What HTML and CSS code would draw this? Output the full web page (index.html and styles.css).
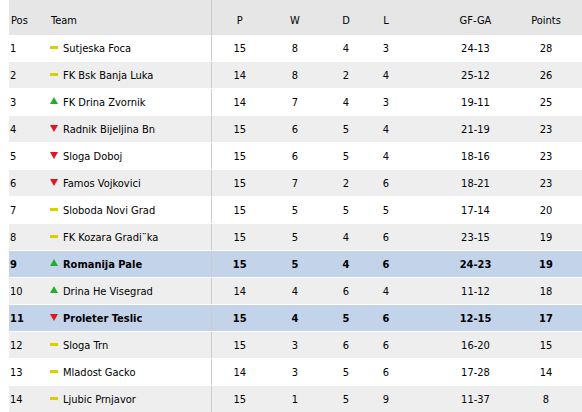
FILE: index.html
```html
<!DOCTYPE html>
<html>
<head>
<meta charset="utf-8">
<link rel="stylesheet" href="styles.css">
</head>
<body>
<table class="standings">
  <colgroup>
    <col class="c-pos"><col class="c-team"><col class="c-p"><col class="c-w"><col class="c-d"><col class="c-l"><col class="c-gd"><col class="c-pts">
  </colgroup>
  <thead>
    <tr>
      <th class="pos">Pos</th><th class="team">Team</th><th class="num div">P</th><th class="num">W</th><th class="num">D</th><th class="num">L</th><th class="gd">GF-GA</th><th class="num">Points</th>
    </tr>
  </thead>
  <tbody>
    <tr><td class="pos">1</td><td class="team"><span class="trend same"></span>Sutjeska Foca</td><td class="num div">15</td><td class="num">8</td><td class="num">4</td><td class="num">3</td><td class="gd">24-13</td><td class="num">28</td></tr>
    <tr><td class="pos">2</td><td class="team"><span class="trend same"></span>FK Bsk Banja Luka</td><td class="num div">14</td><td class="num">8</td><td class="num">2</td><td class="num">4</td><td class="gd">25-12</td><td class="num">26</td></tr>
    <tr><td class="pos">3</td><td class="team"><span class="trend up"></span>FK Drina Zvornik</td><td class="num div">14</td><td class="num">7</td><td class="num">4</td><td class="num">3</td><td class="gd">19-11</td><td class="num">25</td></tr>
    <tr><td class="pos">4</td><td class="team"><span class="trend down"></span>Radnik Bijeljina Bn</td><td class="num div">15</td><td class="num">6</td><td class="num">5</td><td class="num">4</td><td class="gd">21-19</td><td class="num">23</td></tr>
    <tr><td class="pos">5</td><td class="team"><span class="trend down"></span>Sloga Doboj</td><td class="num div">15</td><td class="num">6</td><td class="num">5</td><td class="num">4</td><td class="gd">18-16</td><td class="num">23</td></tr>
    <tr><td class="pos">6</td><td class="team"><span class="trend down"></span>Famos Vojkovici</td><td class="num div">15</td><td class="num">7</td><td class="num">2</td><td class="num">6</td><td class="gd">18-21</td><td class="num">23</td></tr>
    <tr><td class="pos">7</td><td class="team"><span class="trend same"></span>Sloboda Novi Grad</td><td class="num div">15</td><td class="num">5</td><td class="num">5</td><td class="num">5</td><td class="gd">17-14</td><td class="num">20</td></tr>
    <tr><td class="pos">8</td><td class="team"><span class="trend same"></span>FK Kozara Gradi¨ka</td><td class="num div">15</td><td class="num">5</td><td class="num">4</td><td class="num">6</td><td class="gd">23-15</td><td class="num">19</td></tr>
    <tr class="hl"><td class="pos">9</td><td class="team"><span class="trend up"></span>Romanija Pale</td><td class="num div">15</td><td class="num">5</td><td class="num">4</td><td class="num">6</td><td class="gd">24-23</td><td class="num">19</td></tr>
    <tr><td class="pos">10</td><td class="team"><span class="trend up"></span>Drina He Visegrad</td><td class="num div">14</td><td class="num">4</td><td class="num">6</td><td class="num">4</td><td class="gd">11-12</td><td class="num">18</td></tr>
    <tr class="hl"><td class="pos">11</td><td class="team"><span class="trend down"></span>Proleter Teslic</td><td class="num div">15</td><td class="num">4</td><td class="num">5</td><td class="num">6</td><td class="gd">12-15</td><td class="num">17</td></tr>
    <tr><td class="pos">12</td><td class="team"><span class="trend same"></span>Sloga Trn</td><td class="num div">15</td><td class="num">3</td><td class="num">6</td><td class="num">6</td><td class="gd">16-20</td><td class="num">15</td></tr>
    <tr><td class="pos">13</td><td class="team"><span class="trend same"></span>Mladost Gacko</td><td class="num div">14</td><td class="num">3</td><td class="num">5</td><td class="num">6</td><td class="gd">17-28</td><td class="num">14</td></tr>
    <tr><td class="pos">14</td><td class="team"><span class="trend same"></span>Ljubic Prnjavor</td><td class="num div">15</td><td class="num">1</td><td class="num">5</td><td class="num">9</td><td class="gd">11-37</td><td class="num">8</td></tr>
  </tbody>
</table>
</body>
</html>
```

FILE: styles.css
```css
html, body {
  margin: 0;
  padding: 0;
  background: #fff;
  overflow: hidden;
}

.standings {
  margin-left: 9px;
  width: 573px;
  table-layout: fixed;
  border-collapse: collapse;
  font-family: "DejaVu Sans Condensed", "DejaVu Sans", sans-serif;
  font-stretch: condensed;
  font-size: 11px;
  color: #000;
}

.c-pos { width: 36px; }
.c-team { width: 166px; }
.c-p { width: 57px; }
.c-w { width: 54px; }
.c-d { width: 48px; }
.c-l { width: 32px; }
.c-gd { width: 108px; }
.c-pts { width: 72px; }

.standings th {
  background: #e6e6e6;
  height: 35px;
  padding: 6px 0 0 0;
  font-weight: normal;
  box-sizing: border-box;
  vertical-align: middle;
}

.standings td {
  height: 26px;
  padding: 0;
  border-bottom: 1px solid #fff;
  vertical-align: middle;
  white-space: nowrap;
}

.standings tbody tr:nth-child(even) td { background: #eeeeee; }
.standings tbody tr.hl td { background: #c3d3ea; font-weight: bold; }

.pos { text-align: left; padding-left: 1px !important; }
th.pos { padding-left: 2px !important; }
.team { text-align: left; padding-left: 5px !important; }
th.team { padding-left: 6px !important; }
.num { text-align: center; }
.gd { text-align: center; padding-left: 39px !important; }
.div { border-left: 1px solid #cccccc; }

.trend {
  display: inline-block;
  width: 8px;
  margin-right: 5px;
  vertical-align: middle;
}
.trend.same {
  height: 3px;
  background: #dccf00;
  position: relative;
  top: -1px;
}
.trend.up {
  width: 0;
  height: 0;
  border-left: 4px solid transparent;
  border-right: 4px solid transparent;
  border-bottom: 7px solid #1fb02a;
  position: relative;
  top: -2px;
}
.trend.down {
  width: 0;
  height: 0;
  border-left: 4px solid transparent;
  border-right: 4px solid transparent;
  border-top: 7px solid #e8141c;
  position: relative;
  top: -1px;
}
```
